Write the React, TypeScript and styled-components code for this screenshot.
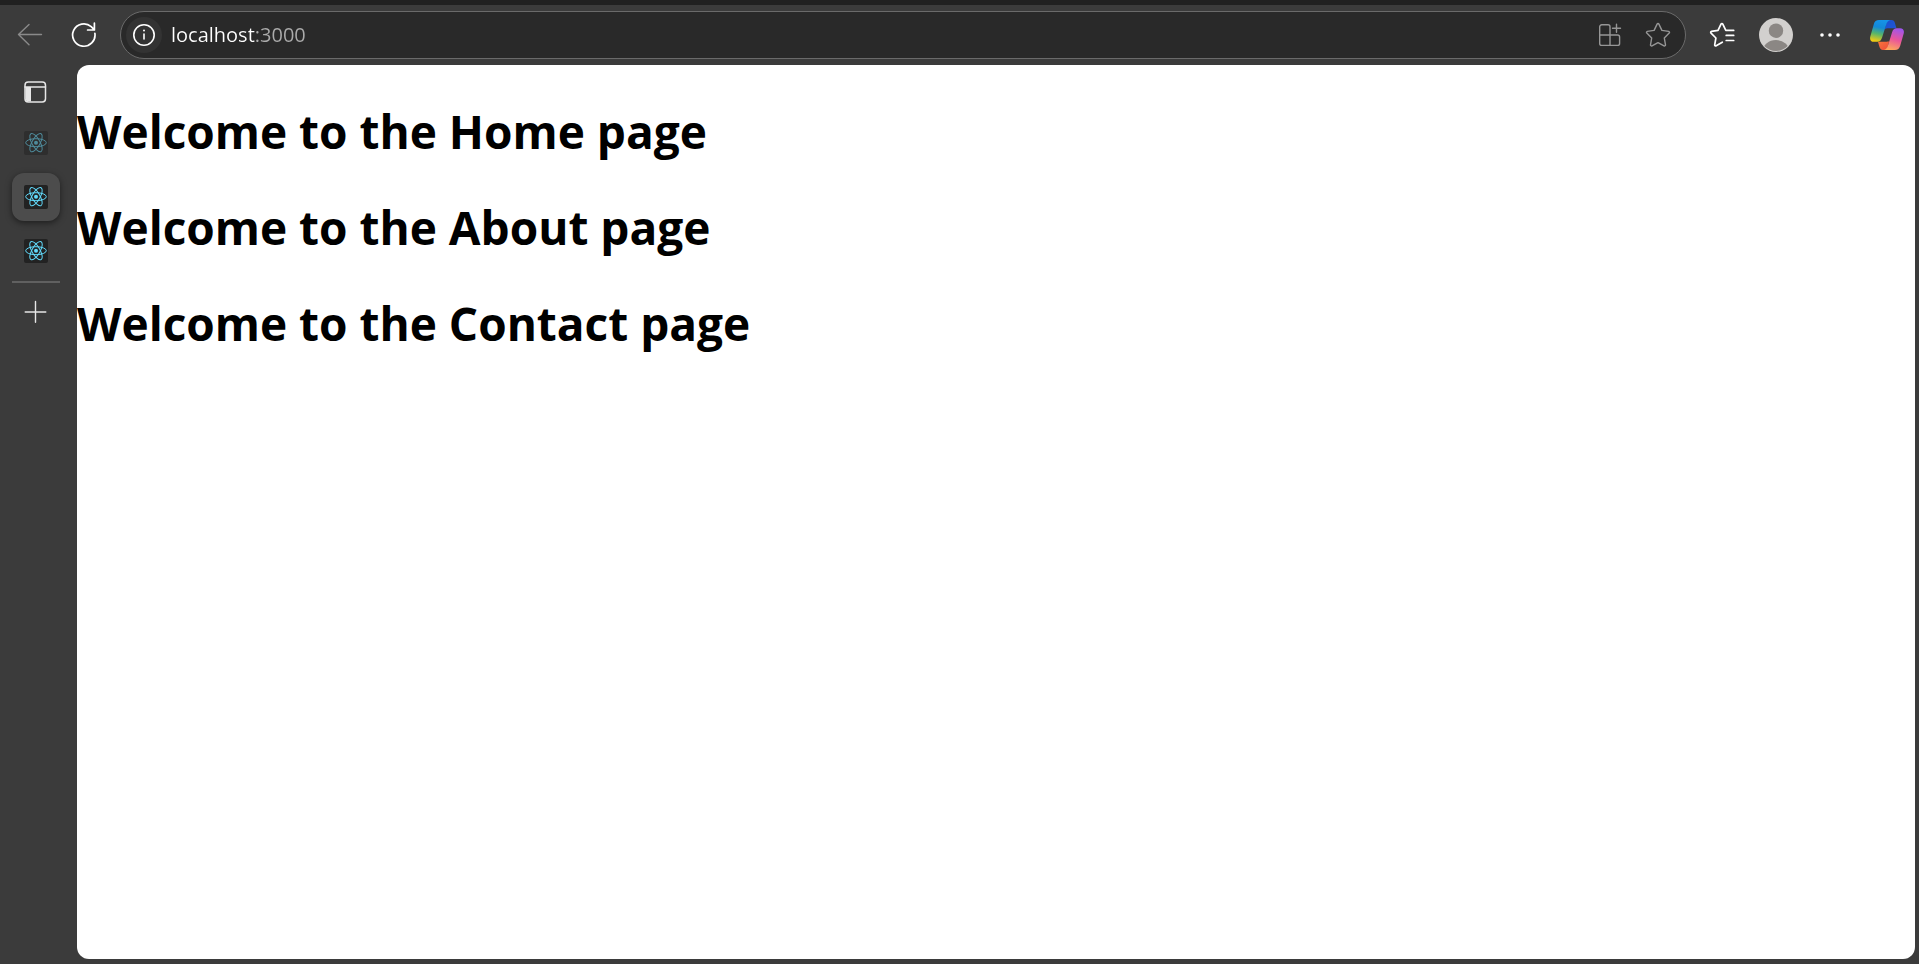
import React from 'react';
import styled, { createGlobalStyle } from 'styled-components';

const GlobalStyle = createGlobalStyle`
  *, *::before, *::after { box-sizing: border-box; }
  body {
    margin: 0;
    background: #3b3b3b;
    font-family: "Open Sans", "Noto Sans", sans-serif;
  }
`;

const Browser = styled.div`
  display: flex;
  flex-direction: column;
  min-height: 100vh;
  border-top: 5px solid #202020;
  background: #3b3b3b;
`;

const Toolbar = styled.header`
  display: flex;
  align-items: center;
  height: 60px;
  padding: 0 2px 0 3px;
`;

const ToolButton = styled.button<{ $wide?: boolean }>`
  display: flex;
  align-items: center;
  justify-content: center;
  flex: none;
  width: ${(p) => (p.$wide ? 60 : 54)}px;
  height: 48px;
  padding: 0;
  border: 0;
  background: none;
  color: #fff;

  &:disabled { color: #8a8a8a; }
`;

const AddressBar = styled.form`
  display: flex;
  align-items: center;
  flex: 1;
  min-width: 0;
  height: 48px;
  margin: 0 9px;
  padding: 0 3px 0 5px;
  border: 1px solid #6a6a6a;
  border-radius: 24px;
  background: #292929;
`;

const SiteInfo = styled.button`
  display: flex;
  align-items: center;
  justify-content: center;
  flex: none;
  width: 36px;
  height: 36px;
  padding: 0;
  border: 0;
  border-radius: 50%;
  background: #333;
  color: #fff;
`;

/* The host is bright and the port is dimmed, split at the colon. */
const AddressInput = styled.input`
  flex: 1;
  min-width: 0;
  height: 38px;
  margin-left: 9px;
  padding: 0;
  border: 0;
  outline: 0;
  background: linear-gradient(to right, #fff 84px, #ababab 84px);
  background-clip: text;
  -webkit-background-clip: text;
  color: transparent;
  caret-color: #fff;
  font: 400 20px/38px "Open Sans", "Noto Sans", sans-serif;
`;

const AddressAction = styled.button`
  display: flex;
  align-items: center;
  justify-content: center;
  flex: none;
  width: 48px;
  height: 36px;
  padding: 0;
  border: 0;
  background: none;
  color: #969696;
`;

const Body = styled.div`
  display: flex;
  flex: 1;
  padding: 0 4px 5px 0;
`;

const TabStrip = styled.nav`
  display: flex;
  flex-direction: column;
  align-items: center;
  flex: none;
  width: 77px;
  padding: 3px 5px 0 0;
`;

const TabButton = styled.button<{ $active?: boolean; $faded?: boolean }>`
  display: flex;
  align-items: center;
  justify-content: center;
  width: 48px;
  height: 48px;
  margin-bottom: 6px;
  padding: 0;
  border: 0;
  border-radius: 12px;
  background: ${(p) => (p.$active ? '#4c4c4c' : 'none')};
  box-shadow: ${(p) => (p.$active ? '0 2px 6px rgba(0, 0, 0, 0.5)' : 'none')};
  opacity: ${(p) => (p.$faded ? 0.5 : 1)};
  color: #e6e6e6;

  &:first-child { margin-bottom: 3px; }
`;

const Divider = styled.hr`
  width: 48px;
  height: 2px;
  margin: 0 0 5px;
  border: 0;
  background: #606060;
`;

const Page = styled.main`
  flex: 1;
  min-width: 0;
  padding: 2px 0 32px;
  border-radius: 12px;
  background: #fff;
  color: #000;
`;

const Heading = styled.h1`
  margin: 32px 0;
  font-size: 46px;
  line-height: 64px;
  font-weight: 700;
`;

const stroke = {
  fill: 'none',
  stroke: 'currentColor',
  strokeLinecap: 'round' as const,
  strokeLinejoin: 'round' as const,
};

const BackIcon = () => (
  <svg width="26" height="24" viewBox="0 0 26 24" {...stroke} strokeWidth="1.4">
    <path d="M12 1.5 1.5 11.5 12 21.8M1.5 11.5H24.5" />
  </svg>
);

const ReloadIcon = () => (
  <svg width="26" height="26" viewBox="0 0 26 26" {...stroke} strokeWidth="1.7">
    <path d="M23.9 11.4A11.2 11.2 0 1 1 20.2 4.6L23.4 7.8M23.4 1.2V8H16.6" />
  </svg>
);

const InfoIcon = () => (
  <svg width="24" height="24" viewBox="0 0 24 24" {...stroke} strokeWidth="1.6">
    <circle cx="12" cy="12" r="10.2" />
    <path d="M12 11V16" />
    <circle cx="12" cy="7.6" r="1" fill="currentColor" stroke="none" />
  </svg>
);

const AppsIcon = () => (
  <svg width="24" height="24" viewBox="0 0 24 24" {...stroke} strokeWidth="1.4">
    <path d="M12 12V3.8A2 2 0 0 0 10 1.8H3.7A2 2 0 0 0 1.7 3.8V20.4A2 2 0 0 0 3.7 22.4H19.6A2 2 0 0 0 21.6 20.4V14A2 2 0 0 0 19.6 12H1.7M12 12V22.4M18.5 1.2V9.2M14.5 5.2H22.5" />
  </svg>
);

const StarIcon = () => (
  <svg width="26" height="26" viewBox="0 0 26 26" {...stroke} strokeWidth="1.4">
    <path d="M12.1 2.1a1 1 0 0 1 1.8 0l3 6.3 6.8 1a1 1 0 0 1 .5 1.7l-4.9 4.9 1.2 6.8a1 1 0 0 1-1.5 1L13 20.6l-6 3.2a1 1 0 0 1-1.5-1L6.7 16 1.8 11.1a1 1 0 0 1 .5-1.7l6.8-1z" />
  </svg>
);

const FavoritesIcon = () => (
  <svg width="26" height="26" viewBox="0 0 26 26" {...stroke} strokeWidth="1.7">
    <path d="M13.3 20.2 7.2 23.8A1 1 0 0 1 5.7 22.8L6.9 16 2 11.1A1 1 0 0 1 2.5 9.4L9 8.4 12 2.1A1 1 0 0 1 13.8 2.1L16.8 8.4H24.7M17.2 13.4H24.7M17.2 18.5H24.7" />
  </svg>
);

const AvatarIcon = () => (
  <svg width="34" height="34" viewBox="0 0 34 34">
    <defs>
      <clipPath id="avatar-clip"><circle cx="17" cy="17" r="16" /></clipPath>
    </defs>
    <circle cx="17" cy="17" r="17" fill="#d2d0ce" />
    <circle cx="17" cy="12.7" r="7.2" fill="#8b8784" />
    <ellipse cx="17" cy="32.5" rx="13" ry="10.4" fill="#8b8784" clipPath="url(#avatar-clip)" />
  </svg>
);

const MoreIcon = () => (
  <svg width="22" height="6" viewBox="0 0 22 6" fill="currentColor">
    <circle cx="3" cy="3" r="1.8" />
    <circle cx="11" cy="3" r="1.8" />
    <circle cx="19" cy="3" r="1.8" />
  </svg>
);

const CopilotIcon = () => (
  <svg width="34" height="30" viewBox="0 0 34 30">
    <defs>
      <linearGradient id="cp-left" x1="0.6" y1="0" x2="0.4" y2="1">
        <stop offset="0" stopColor="#1694e8" />
        <stop offset="0.35" stopColor="#1389d8" />
        <stop offset="0.65" stopColor="#55b56c" />
        <stop offset="1" stopColor="#f2cb12" />
      </linearGradient>
      <linearGradient id="cp-right" x1="0.65" y1="0" x2="0.35" y2="1">
        <stop offset="0" stopColor="#9f55ec" />
        <stop offset="0.5" stopColor="#ea559b" />
        <stop offset="1" stopColor="#ffa95a" />
      </linearGradient>
      <linearGradient id="cp-top" x1="0" y1="0" x2="1" y2="1">
        <stop offset="0" stopColor="#1b52cc" />
        <stop offset="1" stopColor="#2055d8" />
      </linearGradient>
      <linearGradient id="cp-bottom" x1="0" y1="0" x2="1" y2="1">
        <stop offset="0" stopColor="#f7773c" />
        <stop offset="1" stopColor="#ee4a3a" />
      </linearGradient>
    </defs>
    <path fill="url(#cp-top)" d="M17 0H21.5C23.5 0 24.4 1.2 25 3.2L26.4 8.2H18.4C16.8 8.2 15.6 8.4 14.8 9Z" />
    <path fill="url(#cp-bottom)" d="M17 30H13C11 30 10 28.8 9.4 26.8L8 21.8H15.8C17.4 21.8 18.4 21.6 19.2 21Z" />
    <path fill="url(#cp-left)" d="M9 0H20.5C18.3.5 17 2 16.3 4.2L12.1 17.6C11.2 20.4 9.8 21.8 7.2 21.8H4C.8 21.8-.5 19.6.3 16.4L3.8 4.2C4.6 1.4 6.2 0 9 0Z" />
    <path fill="url(#cp-right)" d="M25 30H13.8C16 29.5 17.2 28 17.9 25.8L22 12.4C22.9 9.6 24.3 8.2 26.9 8.2H30C33.2 8.2 34.5 10.4 33.7 13.6L30.2 25.8C29.4 28.6 27.8 30 25 30Z" />
  </svg>
);

const TabPaneIcon = () => (
  <svg width="24" height="24" viewBox="0 0 24 24" {...stroke} strokeWidth="1.5">
    <rect x="1" y="2" width="20.5" height="20" rx="3.2" />
    <path d="M1 7H21.5" />
    <path d="M1.5 7H7V21.5H4A3 3 0 0 1 1.5 19Z" fill="currentColor" stroke="none" />
  </svg>
);

const PlusIcon = () => (
  <svg width="24" height="24" viewBox="0 0 24 24" {...stroke} strokeWidth="1.4">
    <path d="M11.5 1.5V22.3M1.2 12H21.8" />
  </svg>
);

const ReactIcon = () => (
  <svg width="24" height="24" viewBox="0 0 24 24">
    <rect width="24" height="24" rx="2" fill="#222" />
    <g fill="none" stroke="#61dafb" strokeWidth="1">
      <ellipse cx="12" cy="11.7" rx="10.3" ry="4" />
      <ellipse cx="12" cy="11.7" rx="10.3" ry="4" transform="rotate(60 12 11.7)" />
      <ellipse cx="12" cy="11.7" rx="10.3" ry="4" transform="rotate(120 12 11.7)" />
    </g>
    <circle cx="12" cy="11.7" r="2" fill="#61dafb" />
  </svg>
);

const pages = ['Home', 'About', 'Contact'];

export default function App() {
  return (
    <>
      <GlobalStyle />
      <Browser>
        <Toolbar>
          <ToolButton type="button" aria-label="Back" disabled><BackIcon /></ToolButton>
          <ToolButton type="button" aria-label="Refresh"><ReloadIcon /></ToolButton>
          <AddressBar onSubmit={(e) => e.preventDefault()}>
            <SiteInfo type="button" aria-label="View site information"><InfoIcon /></SiteInfo>
            <AddressInput type="text" aria-label="Address" defaultValue="localhost:3000" spellCheck={false} />
            <AddressAction type="button" aria-label="Install app"><AppsIcon /></AddressAction>
            <AddressAction type="button" aria-label="Add to favorites"><StarIcon /></AddressAction>
          </AddressBar>
          <ToolButton type="button" aria-label="Favorites"><FavoritesIcon /></ToolButton>
          <ToolButton type="button" aria-label="Profile"><AvatarIcon /></ToolButton>
          <ToolButton type="button" aria-label="Settings and more"><MoreIcon /></ToolButton>
          <ToolButton type="button" aria-label="Copilot" $wide><CopilotIcon /></ToolButton>
        </Toolbar>
        <Body>
          <TabStrip aria-label="Tabs">
            <TabButton type="button" aria-label="Tab actions"><TabPaneIcon /></TabButton>
            <TabButton type="button" aria-label="React tab 1" $faded><ReactIcon /></TabButton>
            <TabButton type="button" aria-label="React tab 2" $active><ReactIcon /></TabButton>
            <TabButton type="button" aria-label="React tab 3"><ReactIcon /></TabButton>
            <Divider />
            <TabButton type="button" aria-label="New tab"><PlusIcon /></TabButton>
          </TabStrip>
          <Page>
            {pages.map((name) => (
              <Heading key={name}>Welcome to the {name} page</Heading>
            ))}
          </Page>
        </Body>
      </Browser>
    </>
  );
}
